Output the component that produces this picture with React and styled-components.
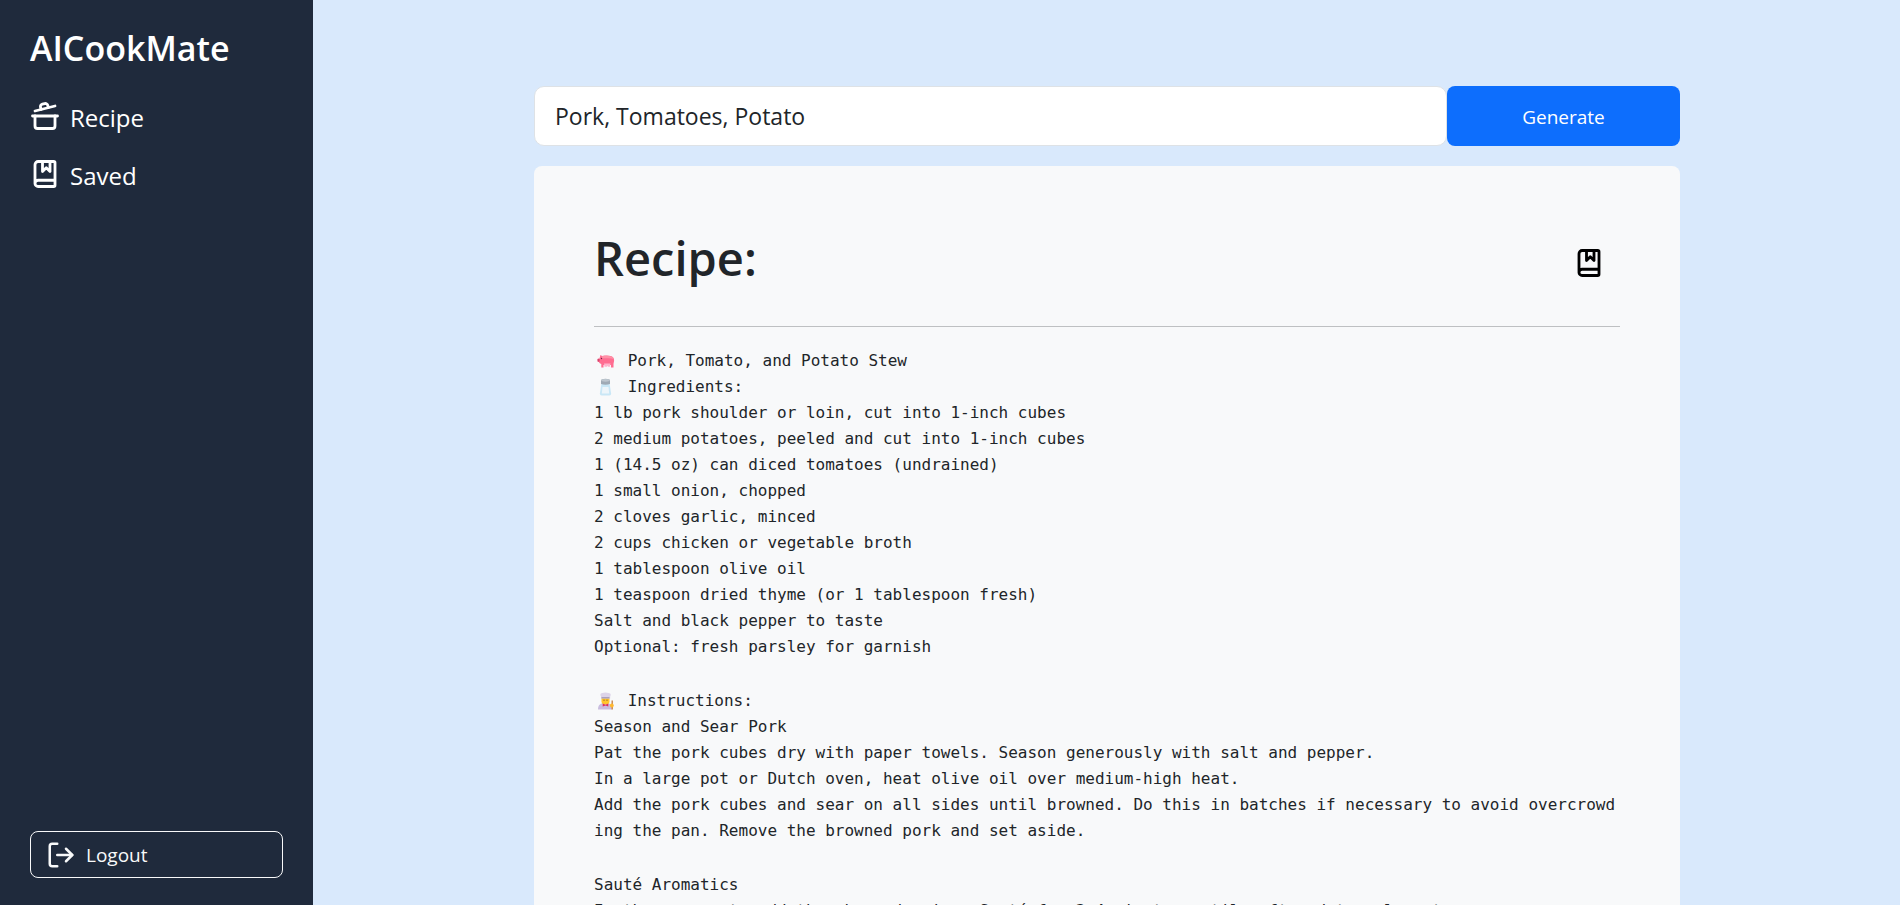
import React, { useState } from 'react';
import styled, { createGlobalStyle } from 'styled-components';
import { CookingPot, BookMarked, LogOut } from 'lucide-react';

const GlobalStyle = createGlobalStyle`
  *, *::before, *::after { box-sizing: border-box; }
  body {
    margin: 0;
    background: #d9e9fc;
    color: #212529;
    font-family: "Segoe UI", "Open Sans", "Noto Sans", sans-serif;
  }
`;

const Layout = styled.div`
  display: flex;
  height: 100vh;
  overflow: hidden;
`;

const Sidebar = styled.aside`
  flex: 0 0 313px;
  display: flex;
  flex-direction: column;
  padding: 26px 30px 27px;
  background: #1f2a3c;
  color: #fff;
`;

const Brand = styled.h1`
  margin: 0 0 28px;
  font-size: 34px;
  line-height: 44px;
  font-weight: 600;
`;

const Nav = styled.nav`
  display: flex;
  flex-direction: column;
  gap: 18px;
  flex: 1;
`;

const NavLink = styled.a`
  display: flex;
  align-items: center;
  gap: 10px;
  height: 40px;
  color: #fff;
  font-size: 24px;
  line-height: 40px;
  text-decoration: none;

  svg { margin-bottom: 4px; }
`;

const LogoutButton = styled.button`
  display: flex;
  align-items: center;
  gap: 10px;
  height: 47px;
  padding: 0 15px;
  border: 1px solid #f8f9fa;
  border-radius: 8px;
  background: transparent;
  color: #f8f9fa;
  font: inherit;
  font-size: 19px;
  cursor: pointer;
`;

const Main = styled.main`
  flex: 1;
  min-width: 0;
  overflow: hidden;
  padding: 86px 220px 0 221px;
`;

const SearchForm = styled.form`
  display: flex;
  height: 60px;
  margin-bottom: 20px;
`;

const SearchInput = styled.input`
  flex: 1;
  min-width: 0;
  padding: 0 20px;
  border: 1px solid #dee2e6;
  border-radius: 10px;
  background: #fff;
  color: #212529;
  font: inherit;
  font-size: 23px;
  outline: none;
`;

const GenerateButton = styled.button`
  flex: 0 0 233px;
  padding: 2px 0 0;
  border: 0;
  border-radius: 8px;
  background: #0d6efd;
  color: #fff;
  font: inherit;
  font-size: 19px;
  cursor: pointer;
`;

const Card = styled.article`
  padding: 60px;
  border-radius: 8px;
  background: #f8f9fa;
`;

const CardHeader = styled.header`
  display: flex;
  align-items: center;
  justify-content: space-between;
  height: 101px;
  padding: 0 16px 36px 0;
  border-bottom: 1px solid #bec0c2;
`;

const CardTitle = styled.h2`
  margin: 0;
  font-size: 47px;
  line-height: 60px;
  font-weight: 600;
`;

const SaveButton = styled.button`
  display: flex;
  margin-top: 10px;
  padding: 0;
  border: 0;
  background: transparent;
  color: #000;
  cursor: pointer;
`;

const RecipeText = styled.div`
  display: flex;
  flex-direction: column;
  gap: 28px;
  padding-top: 21px;
  font-family: Consolas, "DejaVu Sans Mono", monospace;
  font-size: 16px;
  line-height: 26px;
`;

const Block = styled.p`
  margin: 0;
  white-space: pre-wrap;
  word-break: break-all;
`;

const Emoji = styled.svg`
  width: 18px;
  height: 18px;
  margin: 0 3px;
  vertical-align: -4px;
`;

const Pig = () => (
  <Emoji viewBox="0 0 18 18" role="img" aria-label="pig">
    <path d="M3 4.700 3.400 3l1.800 1C8 3.500 12 3.400 14.500 4.200c2 .7 2.700 2.600 2.600 4.600L16.500 12v3.500h-2.500v-2.500H6.500v2.500H4.300v-3.500C2.500 11.500 2 10.500 2 9.700H.8V6.800h1.500z" fill="#ff6d91" />
    <path d="M5 4.300c3.500-.9 7-.8 9.500.1 1.300.5 2 1.400 2.300 2.600C13 5.600 9 6.600 5 6.300z" fill="#ff91a6" />
    <path d="M7 11.500h6.500l-.6 3.300H11l-.5-1-.6 1H7.500z" fill="#ffb3cc" />
    <rect x=".5" y="6.700" width="2" height="3" rx=".7" fill="#d9446d" />
    <circle cx="4.500" cy="6.500" r=".7" fill="#6b2948" />
  </Emoji>
);

const Salt = () => (
  <Emoji viewBox="0 0 18 18" role="img" aria-label="salt">
    <path d="M4.500 5h8l1.600 10.500q.2 2-1.800 2H4.700q-2 0-1.800-2z" fill="#c9e7f6" />
    <path d="M5.500 9h6l.7 6.500H4.800z" fill="#edf5fa" />
    <path d="M4 6V2.600Q4 .8 8.500.8T13 2.600V6Q8.500 7.300 4 6z" fill="#9faab5" />
    <ellipse cx="8.500" cy="2.300" rx="4.300" ry="1.400" fill="#bdc6ce" />
  </Emoji>
);

const Cook = () => (
  <Emoji viewBox="0 0 18 18" role="img" aria-label="cook">
    <path d="M1 17.500c0-5 2.500-6.500 7.500-6.500s6.500 2 6.500 6.500z" fill="#c9bddf" />
    <path d="M4.500 5h8v4.500q0 3-4 3t-4-3z" fill="#ffc52b" />
    <path d="M4 6.500V4.600Q2.300 1 5.300.9q3.200-1 6.400 0 3 .1 1.500 3.700v1.900z" fill="#ddd4e9" />
    <path d="M4.500 5h8v1.500h-8z" fill="#aaa0be" />
    <path d="m5.700 11.500 2.800 1.200 2.800-1.200v3l-2.800-1-2.800 1z" fill="#df315c" />
    <path d="M7 7.700v1M10 7.700v1" stroke="#704234" />
    <path d="M15.200 8.500v9" stroke="#c47b3e" strokeWidth="1.300" />
    <circle cx="14.800" cy="13.500" r="1.900" fill="#ffb82e" />
  </Emoji>
);

export default function App() {
  const [ingredients, setIngredients] = useState('Pork, Tomatoes, Potato');

  return (
    <Layout>
      <GlobalStyle />
      <Sidebar>
        <Brand>AICookMate</Brand>
        <Nav aria-label="Main">
          <NavLink href="#recipe"><CookingPot size={30} strokeWidth={2.25} />Recipe</NavLink>
          <NavLink href="#saved"><BookMarked size={30} strokeWidth={2.25} />Saved</NavLink>
        </Nav>
        <LogoutButton type="button"><LogOut size={30} />Logout</LogoutButton>
      </Sidebar>
      <Main>
        <SearchForm onSubmit={(event) => event.preventDefault()}>
          <SearchInput
            type="text"
            aria-label="Ingredients"
            value={ingredients}
            onChange={(event) => setIngredients(event.target.value)}
          />
          <GenerateButton type="submit">Generate</GenerateButton>
        </SearchForm>
        <Card>
          <CardHeader>
            <CardTitle>Recipe:</CardTitle>
            <SaveButton type="button" aria-label="Save recipe"><BookMarked size={30} strokeWidth={2.25} /></SaveButton>
          </CardHeader>
          <RecipeText>
            <Block>
              <Pig />{' Pork, Tomato, and Potato Stew\n'}
              <Salt />{` Ingredients:
1 lb pork shoulder or loin, cut into 1-inch cubes
2 medium potatoes, peeled and cut into 1-inch cubes
1 (14.5 oz) can diced tomatoes (undrained)
1 small onion, chopped
2 cloves garlic, minced
2 cups chicken or vegetable broth
1 tablespoon olive oil
1 teaspoon dried thyme (or 1 tablespoon fresh)
Salt and black pepper to taste
Optional: fresh parsley for garnish`}
            </Block>
            <Block>
              <Cook />{` Instructions:
Season and Sear Pork
Pat the pork cubes dry with paper towels. Season generously with salt and pepper.
In a large pot or Dutch oven, heat olive oil over medium-high heat.
Add the pork cubes and sear on all sides until browned. Do this in batches if necessary to avoid overcrowding the pan. Remove the browned pork and set aside.`}
            </Block>
            <Block>
              {`Sauté Aromatics
In the same pot, add the chopped onion. Sauté for 3-4 minutes until soft and translucent.`}
            </Block>
          </RecipeText>
        </Card>
      </Main>
    </Layout>
  );
}
